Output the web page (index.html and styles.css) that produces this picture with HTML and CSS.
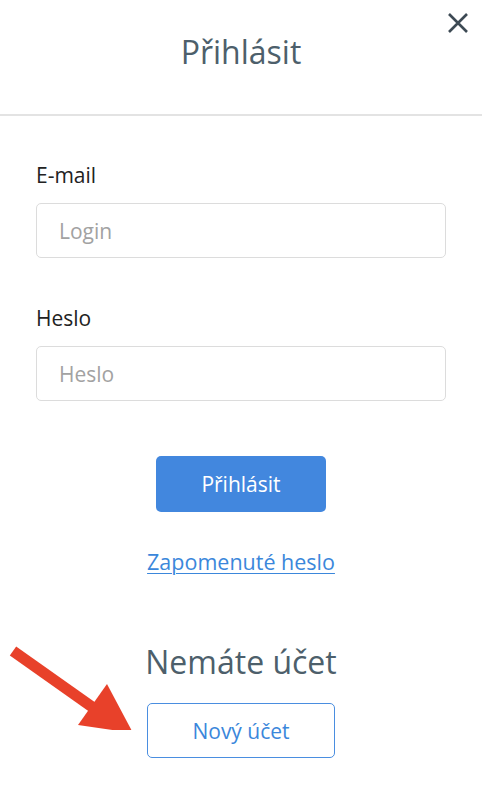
FILE: index.html
```html
<!DOCTYPE html>
<html lang="cs">
<head>
<meta charset="utf-8">
<title>Přihlásit</title>
<link rel="stylesheet" href="styles.css">
</head>
<body>
<div class="modal">
  <header class="header">
    <h1 class="title">Přihlásit</h1>
    <button class="close" aria-label="Zavřít">
      <svg width="22" height="22" viewBox="0 0 22 22"><path d="M2 2L20 20M20 2L2 20" stroke="#3d4a54" stroke-width="2.6" stroke-linecap="butt" fill="none"/></svg>
    </button>
  </header>
  <form class="form">
    <label class="label">E-mail</label>
    <input class="input" type="text" placeholder="Login">
    <label class="label label-second">Heslo</label>
    <input class="input" type="password" placeholder="Heslo">
    <div class="actions">
      <button class="btn-primary" type="button">Přihlásit</button>
      <a class="link" href="#">Zapomenuté heslo</a>
    </div>
  </form>
  <section class="register">
    <h2 class="title">Nemáte účet</h2>
    <button class="btn-outline" type="button">Nový účet</button>
  </section>
  <svg class="arrow" width="140" height="100" viewBox="0 0 140 100">
    <path d="M13 651L95 709" transform="translate(0,-630)" stroke="#e8412a" stroke-width="11" fill="none"/>
    <polygon points="107,684 78,725 133,733" transform="translate(0,-630)" fill="#e8412a"/>
  </svg>
</div>
</body>
</html>
```
FILE: styles.css
```css
* { box-sizing: border-box; }
html, body { margin: 0; padding: 0; background: #fff; }
body { font-family: "Open Sans", "Noto Sans", sans-serif; }
.modal { position: relative; width: 482px; height: 800px; overflow: hidden; }
.header {
  height: 116px;
  border-bottom: 2px solid #e3e3e3;
  padding-top: 32px;
  text-align: center;
}
.title {
  margin: 0;
  font-size: 32px;
  font-weight: 400;
  line-height: 40px;
  color: #4d5f6b;
  text-align: center;
}
.close {
  position: absolute;
  top: 12px;
  right: 13px;
  width: 22px;
  height: 22px;
  padding: 0;
  border: 0;
  background: none;
  display: block;
}
.close svg { display: block; }
.form {
  display: flex;
  flex-direction: column;
  padding: 0 36px;
  margin-top: 47px;
}
.label {
  font-size: 21px;
  line-height: 25px;
  color: #222;
  margin-bottom: 15px;
}
.label-second { margin-top: 48px; }
.input {
  width: 410px;
  height: 55px;
  border: 1px solid #dcdcdc;
  border-radius: 5px;
  padding: 0 22px;
  font-family: inherit;
  font-size: 21px;
  color: #333;
  outline: none;
}
.input::placeholder { color: #a2a2a2; }
.actions {
  display: flex;
  flex-direction: column;
  align-items: center;
  margin-top: 55px;
}
.btn-primary {
  width: 170px;
  height: 56px;
  border: 0;
  border-radius: 5px;
  background: #4287de;
  color: #fff;
  font-family: inherit;
  font-size: 21px;
}
.link {
  margin-top: 36px;
  font-size: 21.5px;
  line-height: 28px;
  color: #3b87db;
  text-decoration: underline;
  text-underline-offset: 3px;
  text-decoration-thickness: 1px;
}
.register {
  display: flex;
  flex-direction: column;
  align-items: center;
  margin-top: 66px;
}
.btn-outline {
  margin-top: 21px;
  width: 188px;
  height: 55px;
  border: 1.5px solid #4a8ee0;
  border-radius: 5px;
  background: #fff;
  color: #3b87db;
  font-family: inherit;
  font-size: 21px;
}
.arrow { position: absolute; left: 0; top: 630px; }
```
